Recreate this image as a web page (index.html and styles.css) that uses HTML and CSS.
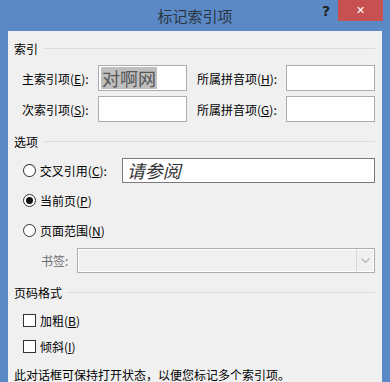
FILE: index.html
```html
<!DOCTYPE html>
<html lang="zh-CN">
<head>
    <meta charset="UTF-8">
    <title>标记索引项</title>
    <link rel="stylesheet" href="styles.css">
</head>
<body>
    <div class="window">
        <div class="titlebar">
            <span class="title">标记索引项</span>
            <span class="help">?</span>
            <span class="close">&#x2715;</span>
        </div>
        <div class="content">
            <div class="legend"><span>索引</span><hr></div>
            <div class="fields">
                <label>主索引项(<u>E</u>):</label>
                <div class="box"><span class="sel">对啊网</span></div>
                <label class="pad">所属拼音项(<u>H</u>):</label>
                <div class="box"></div>
                <label>次索引项(<u>S</u>):</label>
                <div class="box"></div>
                <label class="pad">所属拼音项(<u>G</u>):</label>
                <div class="box"></div>
            </div>

            <div class="legend opts"><span>选项</span><hr></div>
            <div class="option first">
                <span class="radio"></span>
                <span class="opt-label">交叉引用(<u>C</u>):</span>
                <div class="box xref">请参阅</div>
            </div>
            <div class="option">
                <span class="radio checked"></span>
                <span>当前页(<u>P</u>)</span>
            </div>
            <div class="option">
                <span class="radio"></span>
                <span>页面范围(<u>N</u>)</span>
            </div>
            <div class="bookmark">
                <span class="muted">书签:</span>
                <div class="select">
                    <div class="select-arrow">
                        <svg width="9" height="6" viewBox="0 0 9 6"><path d="M0.5 0.5 L4.5 4.5 L8.5 0.5" fill="none" stroke="#b0b0b0" stroke-width="1.2"/></svg>
                    </div>
                </div>
            </div>

            <div class="legend pages"><span>页码格式</span><hr></div>
            <div class="check first"><span class="checkbox"></span><span>加粗(<u>B</u>)</span></div>
            <div class="check"><span class="checkbox"></span><span>倾斜(<u>I</u>)</span></div>

            <p class="note">此对话框可保持打开状态，以便您标记多个索引项。</p>
        </div>
    </div>
</body>
</html>
```

FILE: styles.css
```css
html, body {
    margin: 0;
    padding: 0;
    height: 100%;
    overflow: hidden;
}

body {
    font-family: "Noto Sans CJK SC", "Noto Sans", sans-serif;
    font-size: 12px;
    color: #000;
    background: #5a89c6;
}

.window {
    background: #5a89c6;
    padding: 0 8px;
    height: 382px;
    display: flex;
    flex-direction: column;
}

.titlebar {
    height: 31px;
    flex: none;
    display: flex;
    justify-content: center;
    position: relative;
}

.title {
    font-size: 15px;
    line-height: 31px;
    color: #2b3441;
}

.help {
    position: absolute;
    right: 52px;
    top: 0;
    font-family: "DejaVu Sans", sans-serif;
    font-weight: bold;
    font-size: 14px;
    line-height: 22px;
    color: #222;
}

.close {
    position: absolute;
    right: -1px;
    top: 0;
    width: 45px;
    height: 21px;
    background: #c75050;
    color: #fff;
    font-family: "DejaVu Sans", sans-serif;
    font-weight: bold;
    font-size: 11px;
    line-height: 21px;
    text-align: center;
}

.content {
    flex: 1;
    background: #f0f0f0;
    padding: 8px 7px 0 6px;
}

.legend {
    display: flex;
    align-items: center;
    height: 18px;
    gap: 6px;
}

.legend hr {
    flex: 1;
    border: none;
    border-top: 1px solid #dcdcdc;
    margin: 0;
}

.fields {
    display: grid;
    grid-template-columns: 76px 89px 99px 89px;
    grid-template-rows: 26px 26px;
    row-gap: 5px;
    align-items: center;
    margin: 8px 0 0 8px;
}

.fields label.pad {
    padding-left: 10px;
}

.box {
    box-sizing: border-box;
    height: 100%;
    background: #fff;
    border: 1px solid #adadad;
}

.sel {
    display: inline-block;
    margin: 1px 0 0 2px;
    padding: 0 1px;
    background: #bfbfbf;
    color: #555;
    font-size: 18px;
    line-height: 22px;
}

.opts {
    margin-top: 10px;
}

.option {
    display: flex;
    align-items: center;
    gap: 4px;
    height: 20px;
    margin: 10px 0 0 9px;
}

.option.first {
    height: 25px;
    margin-top: 8px;
}

.option.first + .option {
    margin-top: 7px;
}

.opt-label {
    width: 79px;
}

.radio {
    box-sizing: border-box;
    width: 13px;
    height: 13px;
    border-radius: 50%;
    border: 1px solid #333;
    background: #fff;
    display: flex;
    align-items: center;
    justify-content: center;
}

.radio.checked::after {
    content: "";
    width: 7px;
    height: 7px;
    border-radius: 50%;
    background: #111;
}

.box.xref {
    width: 257px;
    height: 25px;
    border-color: #7a7a7a;
    font-size: 18px;
    font-style: italic;
    line-height: 23px;
    padding-left: 4px;
    color: #333;
}

.bookmark {
    display: flex;
    align-items: center;
    height: 25px;
    margin: 8px 0 0 27px;
}

.muted {
    width: 36px;
    color: #6d6d6d;
}

.select {
    box-sizing: border-box;
    width: 299px;
    height: 25px;
    border: 1px solid #adadad;
    background: #f0f0f0;
    box-shadow: inset 0 0 0 1px #fff;
    display: flex;
    justify-content: flex-end;
}

.select-arrow {
    width: 17px;
    border-left: 1px solid #dadada;
    display: flex;
    align-items: center;
    justify-content: center;
}

.pages {
    margin-top: 10px;
}

.check {
    display: flex;
    align-items: center;
    gap: 4px;
    height: 20px;
    margin: 6px 0 0 9px;
}

.check.first {
    margin-top: 9px;
}

.checkbox {
    box-sizing: border-box;
    width: 13px;
    height: 13px;
    border: 1px solid #333;
    background: #fff;
}

.note {
    margin: 10px 0 0 0;
    line-height: 18px;
}
```
